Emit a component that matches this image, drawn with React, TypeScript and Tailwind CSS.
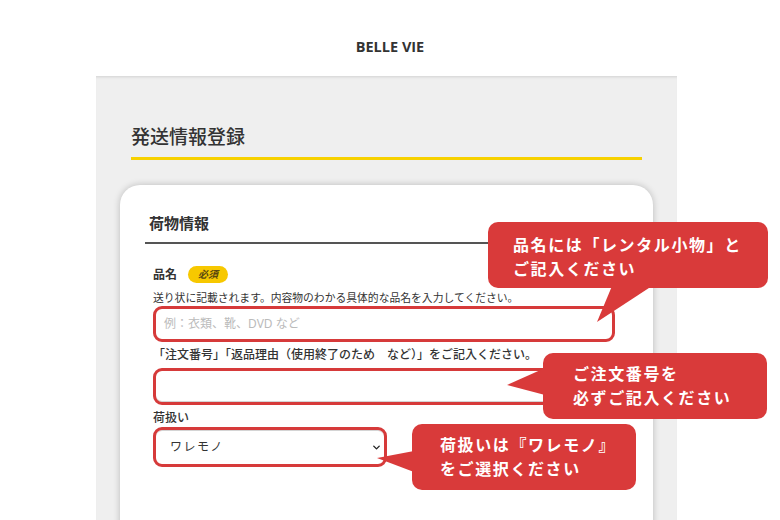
import { ChevronDown } from "lucide-react"

const bubbleText = "text-[16px] font-bold leading-[24px] tracking-[0.1em] text-white"

export default function App() {
  return (
    <div className="relative h-[520px] w-[780px] overflow-hidden bg-white font-['Noto_Sans','Noto_Sans_CJK_JP',sans-serif] text-[#333]">
      {/* Header */}
      <header className="flex h-[76px] items-center justify-center pt-[18px]">
        <span className="font-['Open_Sans','Noto_Sans',sans-serif] text-[14.5px] font-bold text-[#333]">
          BELLE VIE
        </span>
      </header>

      {/* Gray panel */}
      <main className="ml-[96px] h-[444px] w-[581px] bg-[#efefef] px-[24px] pt-[47px] shadow-[inset_0_3px_3px_-2px_rgba(0,0,0,0.12)]">
        <div className="px-[11px]">
          <h1 className="text-[19px] font-medium leading-[28px] text-[#333]">発送情報登録</h1>
          <div className="mt-[6px] h-[3px] bg-[#f7d100]" />
        </div>

        {/* Card */}
        <section className="mt-[25px] h-[400px] rounded-t-[20px] bg-white px-[25px] pt-[27px] shadow-[0_0_7px_rgba(0,0,0,0.22)]">
          <h2 className="pl-[4px] text-[15px] font-bold leading-[22px] text-[#333]">荷物情報</h2>
          <div className="mt-[8px] h-[2px] bg-[#555]" />

          <div className="pl-[8px]">
            <div className="mt-[22px] flex h-[17px] items-center gap-[11px]">
              <span className="text-[12px] font-bold">品名</span>
              <span className="flex h-[17px] w-[40px] items-center justify-center rounded-full bg-[#f7c800] text-[10px] font-bold italic text-[#5a4810]">
                必須
              </span>
            </div>
            <p className="mt-[8px] text-[10.8px] leading-[14px] text-[#333]">
              送り状に記載されます。内容物のわかる具体的な品名を入力してください。
            </p>
            <div className="mt-[1px] flex h-[36px] w-[462px] items-center rounded-[9px] border-[3px] border-[#d63a3a] px-[8px]">
              <span className="text-[12px] text-[#bbb]">例：衣類、靴、DVD など</span>
            </div>

            <p className="mt-[4px] text-[12px] font-medium leading-[18px]">
              「注文番号」「返品理由（使用終了のため　など）」をご記入ください。
            </p>
            <div className="mt-[4px] h-[37px] w-[462px] rounded-[9px] border-[3px] border-[#d63a3a] shadow-[inset_0_-1px_0_#d4d4d4]" />

            <p className="mt-[4px] text-[12px] font-medium leading-[17px]">荷扱い</p>
            <div className="mt-[1px] flex h-[40px] w-[234px] items-center justify-between rounded-[9px] border-[3px] border-[#d63a3a] pl-[14px] pr-[2px] shadow-[inset_0_1px_0_#d4d4d4]">
              <span className="text-[12px] tracking-[0.12em] text-[#333]">ワレモノ</span>
              <ChevronDown className="h-[11px] w-[11px] text-[#222]" strokeWidth={3} />
            </div>
          </div>
        </section>
      </main>

      {/* Annotation tails */}
      <svg className="pointer-events-none absolute left-0 top-0" width="780" height="520" viewBox="0 0 780 520">
        <polygon points="612,286 597,322 652,286" fill="#d93a3a" />
        <polygon points="545,368 507,385 545,395" fill="#d93a3a" />
        <polygon points="414,451 377,458 414,472" fill="#d93a3a" />
      </svg>

      {/* Annotation bubbles */}
      <div className="absolute left-[488px] top-[222px] flex h-[66px] w-[280px] flex-col justify-center rounded-[10px] bg-[#d93a3a] pl-[25px] pt-[3px]">
        <span className={bubbleText}>品名には「レンタル小物」と</span>
        <span className={bubbleText}>ご記入ください</span>
      </div>
      <div className="absolute left-[543px] top-[353px] flex h-[66px] w-[224px] flex-col justify-center rounded-[10px] bg-[#d93a3a] pl-[30px]">
        <span className={bubbleText}>ご注文番号を</span>
        <span className={bubbleText}>必ずご記入ください</span>
      </div>
      <div className="absolute left-[412px] top-[424px] flex h-[66px] w-[224px] flex-col justify-center rounded-[10px] bg-[#d93a3a] pl-[28px]">
        <span className={bubbleText}>荷扱いは『ワレモノ』</span>
        <span className={bubbleText}>をご選択ください</span>
      </div>
    </div>
  )
}
